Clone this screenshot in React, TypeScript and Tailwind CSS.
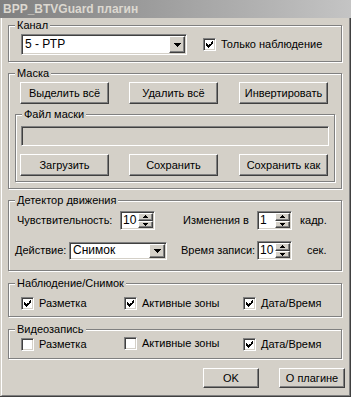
import React from "react"

const raised =
  "border border-t-white border-l-white border-r-[#404040] border-b-[#404040] shadow-[inset_-1px_-1px_0_#808080]"
const sunken =
  "border border-t-[#808080] border-l-[#808080] border-r-white border-b-white shadow-[inset_1px_1px_0_#404040,inset_-1px_-1px_0_#d4d0c8]"
const etched = "border border-[#808080] shadow-[inset_1px_1px_0_#fff,1px_1px_0_#fff]"

function Group({ label, className, children }: { label: string; className: string; children?: React.ReactNode }) {
  return (
    <div className={`relative shrink-0 ${etched} ${className}`}>
      <span className="absolute left-[6px] top-[-7px] bg-[#d4d0c8] px-[2px] leading-[13px] whitespace-nowrap">
        {label}
      </span>
      {children}
    </div>
  )
}

function Button({ children, className }: { children: React.ReactNode; className: string }) {
  return (
    <div className={`${raised} flex items-center justify-center shrink-0 ${className}`}>
      {children}
    </div>
  )
}

function DownArrow() {
  return (
    <svg width="7" height="4" viewBox="0 0 7 4" className="block">
      <path d="M0 0h7v1h-7z M1 1h5v1h-5z M2 2h3v1h-3z M3 3h1v1h-1z" fill="#000" />
    </svg>
  )
}

function Combo({ value, className }: { value: string; className: string }) {
  return (
    <div className={`${sunken} bg-white p-px flex shrink-0 ${className}`}>
      <div className="flex-1 flex items-center pl-[2px] text-[12px]">{value}</div>
      <div className={`${raised} bg-[#d4d0c8] w-[16px] flex items-center justify-center`}>
        <DownArrow />
      </div>
    </div>
  )
}

function SpinArrow({ up }: { up?: boolean }) {
  return (
    <svg width="5" height="3" viewBox="0 0 5 3" className={`block ${up ? "" : "rotate-180"}`}>
      <path d="M2 0h1v1h-1z M1 1h3v1h-3z M0 2h5v1h-5z" fill="#000" />
    </svg>
  )
}

function Spin({ value }: { value: string }) {
  return (
    <div className={`${sunken} bg-white p-px flex w-[35px] h-[19px] shrink-0`}>
      <div className="flex-1 flex items-center pl-[1px] text-[12px]">{value}</div>
      <div className="w-[15px] flex flex-col">
        <div className={`${raised} bg-[#d4d0c8] flex-1 flex items-center justify-center`}>
          <SpinArrow up />
        </div>
        <div className={`${raised} bg-[#d4d0c8] flex-1 flex items-center justify-center`}>
          <SpinArrow />
        </div>
      </div>
    </div>
  )
}

function Check({ checked, label, className }: { checked: boolean; label: string; className?: string }) {
  return (
    <div className={`flex items-center shrink-0 ${className ?? ""}`}>
      <div className={`${sunken} bg-white w-[13px] h-[13px] p-px shrink-0`}>
        {checked && (
          <svg width="9" height="9" viewBox="0 0 9 9" className="block">
            <path
              d="M7 1h1v1h-1z M6 2h2v1h-2z M1 3h1v1h-1z M6 3h2v1h-2z M1 4h2v1h-2z M4 4h3v1h-3z M1 5h5v1h-5z M2 6h3v1h-3z M3 7h1v1h-1z"
              fill="#000"
            />
          </svg>
        )}
      </div>
      <span className="ml-[5px] whitespace-nowrap">{label}</span>
    </div>
  )
}

export default function App() {
  return (
    <div className="w-[351px] h-[397px] bg-[#d4d0c8] flex flex-col text-[11px] leading-[13px] text-black font-[Liberation_Sans,Arial,sans-serif] select-none overflow-hidden">
      <div className="h-[18px] shrink-0 bg-gradient-to-r from-[#808080] to-[#c4c4c4] text-[#dcd8d0] text-[12px] font-bold flex items-center pl-[3px]">
        BPP_BTVGuard плагин
      </div>

      <div className="flex-1 flex flex-col pl-px border-r border-b border-[#404040]">
        <div className="flex-1 flex flex-col border-l border-l-white border-r border-r-[#808080] border-b border-b-[#808080]">
          {/* Канал */}
          <Group label="Канал" className="ml-[6px] mt-[7px] w-[334px] h-[37px] flex items-start pl-[12px] pt-[8px]">
            <Combo value="5 - РТР" className="w-[166px] h-[21px]" />
            <Check checked label="Только наблюдение" className="ml-[16px] mt-[4px]" />
          </Group>

          {/* Маска */}
          <Group label="Маска" className="ml-[6px] mt-[11px] w-[334px] h-[116px] flex flex-col">
            <div className="flex mt-[8px] ml-[11px]">
              <Button className="w-[89px] h-[22px]">Выделить всё</Button>
              <Button className="w-[89px] h-[22px] ml-[20px]">Удалить всё</Button>
              <Button className="w-[89px] h-[22px] ml-[21px]">Инвертировать</Button>
            </div>
            <Group label="Файл маски" className="ml-[6px] mt-[10px] w-[320px] h-[68px] flex flex-col">
              <div className={`${sunken} bg-[#d4d0c8] ml-[5px] mt-[11px] w-[308px] h-[20px]`} />
              <div className="flex mt-[8px] ml-[4px]">
                <Button className="w-[89px] h-[22px]">Загрузить</Button>
                <Button className="w-[89px] h-[22px] ml-[20px]">Сохранить</Button>
                <Button className="w-[89px] h-[22px] ml-[21px]">Сохранить как</Button>
              </div>
            </Group>
          </Group>

          {/* Детектор движения */}
          <Group label="Детектор движения" className="ml-[6px] mt-[11px] w-[334px] h-[71px] flex flex-col">
            <div className="flex items-center mt-[10px] pl-[8px]">
              <span className="w-[103px] shrink-0">Чувствительность:</span>
              <Spin value="10" />
              <span className="w-[102px] shrink-0 pl-[28px]">Изменения в</span>
              <Spin value="1" />
              <span className="ml-[8px]">кадр.</span>
            </div>
            <div className="flex items-center mt-[11px] pl-[6px]">
              <span className="w-[54px] shrink-0">Действие:</span>
              <Combo value="Снимок" className="w-[98px] h-[18px]" />
              <span className="w-[90px] shrink-0 pl-[14px] whitespace-nowrap">Время записи:</span>
              <Spin value="10" />
              <span className="ml-[15px]">сек.</span>
            </div>
          </Group>

          {/* Наблюдение/Снимок */}
          <Group label="Наблюдение/Снимок" className="ml-[6px] mt-[12px] w-[334px] h-[34px] flex items-start pl-[12px] pt-[13px]">
            <Check checked label="Разметка" className="w-[103px]" />
            <Check checked label="Активные зоны" className="w-[119px]" />
            <Check checked label="Дата/Время" />
          </Group>

          {/* Видеозапись */}
          <Group label="Видеозапись" className="ml-[6px] mt-[12px] w-[334px] h-[30px] flex items-start pl-[12px] pt-[8px]">
            <Check checked={false} label="Разметка" className="w-[103px]" />
            <Check checked={false} label="Активные зоны" className="w-[119px] -mt-[1px]" />
            <Check checked label="Дата/Время" />
          </Group>

          <div className="flex mt-[9px] ml-[201px]">
            <Button className="w-[56px] h-[20px]">OK</Button>
            <Button className="w-[66px] h-[20px] ml-[20px]">О плагине</Button>
          </div>
        </div>
      </div>
    </div>
  )
}
